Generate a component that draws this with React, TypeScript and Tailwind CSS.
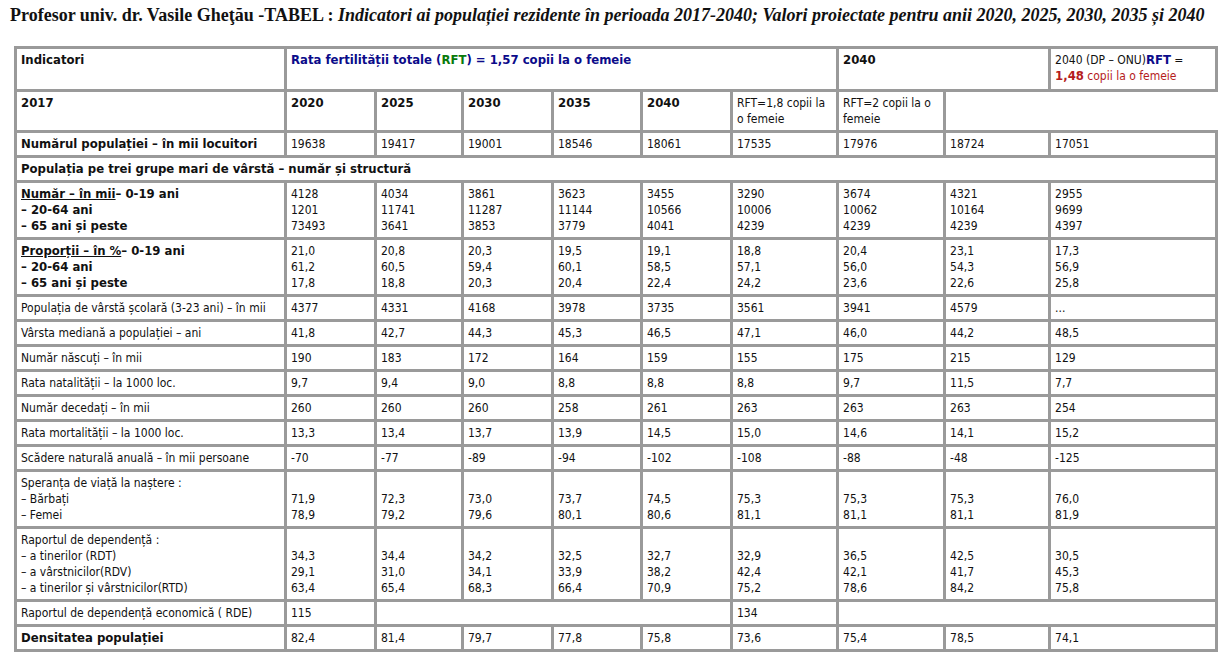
import { ReactNode } from "react";

// Every cell gets the same gray 3px grid border and small padding.
const cell = "border-[3px] border-[#9a9a9a] px-[4px] py-[3px] align-top";
const strong = "font-bold text-[13px]";

// Columns after "Indicatori": 2020 … 2040, then the two alternative scenarios and the UN one.
type Row = { label: ReactNode; values: string[] };

const simpleRows: Row[] = [
  { label: "Populația de vârstă școlară (3-23 ani) – în mii", values: ["4377", "4331", "4168", "3978", "3735", "3561", "3941", "4579", "..."] },
  { label: "Vârsta mediană a populației – ani", values: ["41,8", "42,7", "44,3", "45,3", "46,5", "47,1", "46,0", "44,2", "48,5"] },
  { label: "Număr născuți – în mii", values: ["190", "183", "172", "164", "159", "155", "175", "215", "129"] },
  { label: "Rata natalității – la 1000 loc.", values: ["9,7", "9,4", "9,0", "8,8", "8,8", "8,8", "9,7", "11,5", "7,7"] },
  { label: "Număr decedați – în mii", values: ["260", "260", "260", "258", "261", "263", "263", "263", "254"] },
  { label: "Rata mortalității – la 1000 loc.", values: ["13,3", "13,4", "13,7", "13,9", "14,5", "15,0", "14,6", "14,1", "15,2"] },
  { label: "Scădere naturală anuală – în mii persoane", values: ["-70", "-77", "-89", "-94", "-102", "-108", "-88", "-48", "-125"] },
];

// Multi-line cells: each inner array is one cell, one entry per line ("" = empty line).
const numbers = [
  ["4128", "1201", "73493"], ["4034", "11741", "3641"], ["3861", "11287", "3853"],
  ["3623", "11144", "3779"], ["3455", "10566", "4041"], ["3290", "10006", "4239"],
  ["3674", "10062", "4239"], ["4321", "10164", "4239"], ["2955", "9699", "4397"],
];
const shares = [
  ["21,0", "61,2", "17,8"], ["20,8", "60,5", "18,8"], ["20,3", "59,4", "20,3"],
  ["19,5", "60,1", "20,4"], ["19,1", "58,5", "22,4"], ["18,8", "57,1", "24,2"],
  ["20,4", "56,0", "23,6"], ["23,1", "54,3", "22,6"], ["17,3", "56,9", "25,8"],
];
const lifeExp = [
  ["", "71,9", "78,9"], ["", "72,3", "79,2"], ["", "73,0", "79,6"],
  ["", "73,7", "80,1"], ["", "74,5", "80,6"], ["", "75,3", "81,1"],
  ["", "75,3", "81,1"], ["", "75,3", "81,1"], ["", "76,0", "81,9"],
];
const dependency = [
  ["", "34,3", "29,1", "63,4"], ["", "34,4", "31,0", "65,4"], ["", "34,2", "34,1", "68,3"],
  ["", "32,5", "33,9", "66,4"], ["", "32,7", "38,2", "70,9"], ["", "32,9", "42,4", "75,2"],
  ["", "36,5", "42,1", "78,6"], ["", "42,5", "41,7", "84,2"], ["", "30,5", "45,3", "75,8"],
];

function Lines({ lines }: { lines: string[] }) {
  return (
    <>
      {lines.map((l, i) => (
        <div key={i} className="h-4">{l}</div>
      ))}
    </>
  );
}

function MultiRow({ label, cells }: { label: ReactNode; cells: string[][] }) {
  return (
    <tr>
      <td className={cell}>{label}</td>
      {cells.map((c, i) => (
        <td key={i} className={cell}>
          <Lines lines={c} />
        </td>
      ))}
    </tr>
  );
}

export default function App() {
  return (
    <div className="min-h-screen bg-white px-[10px] pt-[4px] text-[#111]">
      {/* Page title */}
      <h1 className="font-['Liberation_Serif',serif] text-[18px] leading-[22px] font-bold">
        Profesor univ. dr. Vasile Gheţău -TABEL :{" "}
        <i>Indicatori ai populației rezidente în perioada 2017-2040; Valori proiectate pentru anii 2020, 2025, 2030, 2035 și 2040</i>
      </h1>

      {/* Main data table */}
      <table className="mt-[20px] ml-[4px] w-[1201px] table-fixed border-collapse font-['DejaVu_Sans_Condensed','DejaVu_Sans',sans-serif] text-[12px] leading-4">
        <colgroup>
          <col className="w-[270px]" />
          <col className="w-[90px]" />
          <col className="w-[87px]" />
          <col className="w-[90px]" />
          <col className="w-[89px]" />
          <col className="w-[90px]" />
          <col className="w-[106px]" />
          <col className="w-[107px]" />
          <col className="w-[105px]" />
          <col className="w-[167px]" />
        </colgroup>
        <tbody>
          {/* Header row 1 */}
          <tr className="h-[43px]">
            <td className={`${cell} ${strong}`}>Indicatori</td>
            <td colSpan={6} className={`${cell} ${strong} text-[#0b0b8a]`}>
              Rata fertilității totale (<span className="text-[#0a7a0a]">RFT</span>) = 1,57 copii la o femeie
            </td>
            <td colSpan={2} className={`${cell} ${strong}`}>2040</td>
            <td className={cell}>
              2040 (DP – ONU)<b className="text-[13px] text-[#0b0b8a]">RFT</b> =<br />
              <span className="text-[#b51c1c]">
                <b className="text-[13px]">1,48</b> copii la o femeie
              </span>
            </td>
          </tr>

          {/* Header row 2: years (last two columns have no cells) */}
          <tr>
            {["2017", "2020", "2025", "2030", "2035", "2040"].map((y) => (
              <td key={y} className={`${cell} ${strong}`}>{y}</td>
            ))}
            <td className={cell}>RFT=1,8 copii la o femeie</td>
            <td className={cell}>RFT=2 copii la o femeie</td>
          </tr>

          <tr>
            <td className={`${cell} ${strong}`}>Numărul populației – în mii locuitori</td>
            {["19638", "19417", "19001", "18546", "18061", "17535", "17976", "18724", "17051"].map((v, i) => (
              <td key={i} className={cell}>{v}</td>
            ))}
          </tr>

          <tr>
            <td colSpan={10} className={`${cell} ${strong}`}>
              Populația pe trei grupe mari de vârstă – număr și structură
            </td>
          </tr>

          <MultiRow
            label={
              <div className={strong}>
                <div className="h-4"><u>Număr – în mii</u>– 0-19 ani</div>
                <div className="h-4">– 20-64 ani</div>
                <div className="h-4">– 65 ani și peste</div>
              </div>
            }
            cells={numbers}
          />
          <MultiRow
            label={
              <div className={strong}>
                <div className="h-4"><u>Proporții – în %</u>– 0-19 ani</div>
                <div className="h-4">– 20-64 ani</div>
                <div className="h-4">– 65 ani și peste</div>
              </div>
            }
            cells={shares}
          />

          {simpleRows.map((r, i) => (
            <tr key={i}>
              <td className={cell}>{r.label}</td>
              {r.values.map((v, j) => (
                <td key={j} className={cell}>{v}</td>
              ))}
            </tr>
          ))}

          <MultiRow
            label={<Lines lines={["Speranța de viață la naștere :", "– Bărbați", "– Femei"]} />}
            cells={lifeExp}
          />
          <MultiRow
            label={
              <Lines
                lines={[
                  "Raportul de dependență :",
                  "– a tinerilor (RDT)",
                  "– a vârstnicilor(RDV)",
                  "– a tinerilor și vârstnicilor(RTD)",
                ]}
              />
            }
            cells={dependency}
          />

          {/* Economic dependency ratio is only given for two columns */}
          <tr>
            <td className={cell}>Raportul de dependență economică ( RDE)</td>
            <td className={cell}>115</td>
            <td colSpan={4} className={cell}></td>
            <td className={cell}>134</td>
            <td colSpan={3} className={cell}></td>
          </tr>

          <tr>
            <td className={`${cell} ${strong}`}>Densitatea populației</td>
            {["82,4", "81,4", "79,7", "77,8", "75,8", "73,6", "75,4", "78,5", "74,1"].map((v, i) => (
              <td key={i} className={cell}>{v}</td>
            ))}
          </tr>
        </tbody>
      </table>
    </div>
  );
}
